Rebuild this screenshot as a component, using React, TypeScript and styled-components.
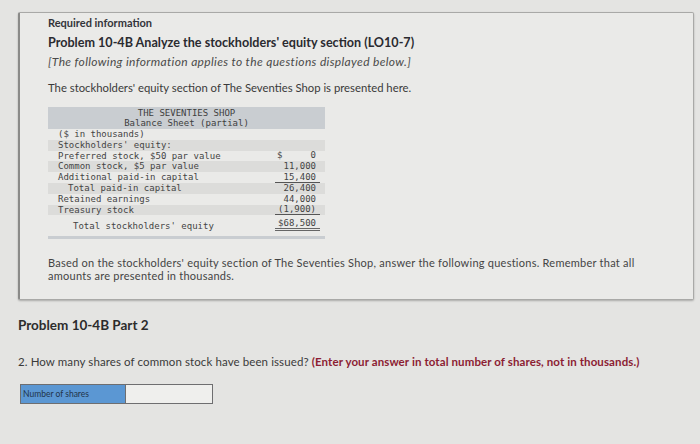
import { createGlobalStyle, styled } from 'styled-components';

const GlobalStyle = createGlobalStyle`
  body {
    margin: 0;
    background: #e4e4e2;
    font-family: Lato, "Open Sans", sans-serif;
    color: #2b2b2b;
  }
`;

interface Row {
  label: string;
  indent?: number;
  dollar?: string;
  value?: string;
  rule?: 'single' | 'double';
  shade?: boolean;
  tall?: boolean;
}

const rows: Row[] = [
  { label: '($ in thousands)' },
  { label: "Stockholders' equity:", shade: true },
  { label: 'Preferred stock, $50 par value', dollar: '$', value: '0' },
  { label: 'Common stock, $5 par value', value: '11,000', shade: true },
  { label: 'Additional paid-in capital', value: '15,400', rule: 'single' },
  { label: 'Total paid-in capital', indent: 2, value: '26,400', shade: true },
  { label: 'Retained earnings', value: '44,000' },
  { label: 'Treasury stock', value: '(1,900)', rule: 'single', shade: true },
  { label: "Total stockholders' equity", indent: 3, value: '$68,500', rule: 'double', tall: true },
];

export default function App() {
  return (
    <>
      <GlobalStyle />
      <Page>
        <InfoBox>
          <Required>Required information</Required>
          <Title>Problem 10-4B Analyze the stockholders' equity section (LO10-7)</Title>
          <Note>[The following information applies to the questions displayed below.]</Note>
          <Intro>The stockholders' equity section of The Seventies Shop is presented here.</Intro>
          <Sheet>
            <SheetHeader>
              <div>THE SEVENTIES SHOP</div>
              <div>Balance Sheet (partial)</div>
            </SheetHeader>
            {rows.map((r) => (
              <SheetRow key={r.label} $shade={r.shade} $tall={r.tall}>
                <Label $indent={r.indent ?? 0}>{r.label}</Label>
                <Amount $rule={r.rule}>
                  <span>{r.dollar}</span>
                  <span>{r.value}</span>
                </Amount>
              </SheetRow>
            ))}
            <SheetFooter />
          </Sheet>
          <Based>
            Based on the stockholders' equity section of The Seventies Shop, answer the following questions. Remember that all
            amounts are presented in thousands.
          </Based>
        </InfoBox>
        <PartTitle>Problem 10-4B Part 2</PartTitle>
        <Question>
          2. How many shares of common stock have been issued?{' '}
          <Emph>(Enter your answer in total number of shares, not in thousands.)</Emph>
        </Question>
        <AnswerRow>
          <AnswerLabel>Number of shares</AnswerLabel>
          <AnswerInput />
        </AnswerRow>
      </Page>
    </>
  );
}

const Page = styled.div`
  width: 700px;
  height: 444px;
  padding: 12px 6px 0 18px;
  box-sizing: border-box;
  overflow: hidden;
`;

const InfoBox = styled.div`
  background: #eaeae8;
  border: 1px solid #a9a9a7;
  border-left: 2px solid #8a8a88;
  border-radius: 2px;
  box-shadow: 0 1px 2px rgba(0, 0, 0, 0.25);
  padding: 3px 0 14px 28px;
  height: 288px;
  box-sizing: border-box;
`;

const Required = styled.div`
  font-size: 11px;
  font-weight: 700;
  line-height: 14px;
  color: #33343a;
`;

const Title = styled.div`
  margin-top: 5px;
  font-size: 12.6px;
  font-weight: 700;
  line-height: 16px;
  color: #2a2b30;
`;

const Note = styled.div`
  margin-top: 4px;
  font-size: 12px;
  letter-spacing: 0.35px;
  font-style: italic;
  line-height: 14px;
  color: #4a4a4a;
`;

const Intro = styled.div`
  margin-top: 12px;
  font-size: 11.3px;
  line-height: 14px;
  color: #3a3a3a;
`;

const Sheet = styled.div`
  margin-top: 12px;
  width: 277px;
  font-family: "DejaVu Sans Mono", "Liberation Mono", monospace;
  font-size: 9px;
  color: #444;
`;

const SheetHeader = styled.div`
  background: #c9cdd1;
  text-align: center;
  line-height: 10px;
  padding: 1px 0 1px;
  color: #3e3e3e;
`;

const SheetRow = styled.div<{ $shade?: boolean; $tall?: boolean }>`
  display: flex;
  justify-content: space-between;
  align-items: flex-end;
  height: ${(p) => (p.$tall ? '16px' : '10.8px')};
  line-height: 10.8px;
  padding: 0 5px 0 10px;
  background: ${(p) => (p.$shade ? '#dcdcda' : 'transparent')};
`;

const Label = styled.span<{ $indent: number }>`
  padding-left: ${(p) => p.$indent * 5}px;
  white-space: pre;
`;

const Amount = styled.span<{ $rule?: 'single' | 'double' }>`
  display: flex;
  justify-content: space-between;
  width: 45px;
  box-sizing: border-box;
  padding: 0 4px 0 2px;
  line-height: 10px;
  border-bottom: ${(p) =>
    p.$rule === 'single' ? '1px solid #555' : p.$rule === 'double' ? '3px double #666' : '1px solid transparent'};
`;

const SheetFooter = styled.div`
  margin-top: 5px;
  height: 3px;
  background: #c9cdd1;
`;

const Based = styled.div`
  margin-top: 17px;
  font-size: 11px;
  letter-spacing: 0.25px;
  line-height: 13px;
  color: #444;
  padding-right: 40px;
`;

const PartTitle = styled.div`
  margin-top: 17px;
  font-size: 13.5px;
  font-weight: 700;
  line-height: 16px;
  color: #2c2c2c;
`;

const Question = styled.div`
  margin-top: 22px;
  font-size: 11.5px;
  letter-spacing: 0.1px;
  line-height: 14px;
  color: #3a3a3a;
`;

const Emph = styled.span`
  font-weight: 700;
  color: #8c1d33;
`;

const AnswerRow = styled.div`
  margin-top: 15px;
  margin-left: 2px;
  display: flex;
  width: 191px;
  height: 18px;
  border: 1px solid #6e6e70;
`;

const AnswerLabel = styled.div`
  width: 104px;
  background: #5b97d3;
  font-size: 8.5px;
  line-height: 18px;
  padding-left: 2px;
  color: #22344a;
  box-sizing: border-box;
`;

const AnswerInput = styled.div`
  flex: 1;
  background: #efefed;
  border-left: 1px solid #6e6e70;
`;
